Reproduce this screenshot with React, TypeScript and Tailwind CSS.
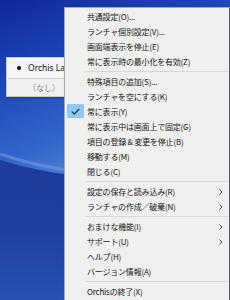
import React from "react";

type Item = { label: string; sub?: boolean; checked?: boolean } | "sep";

const items: Item[] = [
  { label: "共通設定(O)..." },
  { label: "ランチャ個別設定(V)..." },
  { label: "画面端表示を停止(E)" },
  { label: "常に表示時の最小化を有効(Z)" },
  "sep",
  { label: "特殊項目の追加(S)..." },
  { label: "ランチャを空にする(K)" },
  { label: "常に表示(Y)", checked: true },
  { label: "常に表示中は画面上で固定(G)" },
  { label: "項目の登録 & 変更を停止(B)" },
  { label: "移動する(M)" },
  { label: "閉じる(C)" },
  "sep",
  { label: "設定の保存と読み込み(R)", sub: true },
  { label: "ランチャの作成／破棄(N)", sub: true },
  "sep",
  { label: "おまけな機能(I)", sub: true },
  { label: "サポート(U)", sub: true },
  { label: "ヘルプ(H)" },
  { label: "バージョン情報(A)" },
  "sep",
  { label: "Orchisの終了(X)" },
];

const font = { fontFamily: '"Noto Sans CJK JP", "Noto Sans", sans-serif' };

function Wallpaper() {
  return (
    <svg className="absolute inset-0" width="230" height="300" viewBox="0 0 230 300">
      <defs>
        <linearGradient id="top" x1="0" y1="0" x2="0.3" y2="1">
          <stop offset="0" stopColor="#11289a" />
          <stop offset="0.25" stopColor="#1c45b6" />
          <stop offset="0.5" stopColor="#3566cb" />
          <stop offset="0.6" stopColor="#4a7ad3" />
          <stop offset="1" stopColor="#2a58be" />
        </linearGradient>
        <linearGradient id="bot" x1="0" y1="0" x2="0" y2="1">
          <stop offset="0" stopColor="#1c3c9c" />
          <stop offset="0.5" stopColor="#1f409f" />
          <stop offset="1" stopColor="#2852b4" />
        </linearGradient>
      </defs>
      <rect width="230" height="300" fill="url(#top)" />
      <path d="M0 160 C 40 172, 90 182, 230 186 L230 300 L0 300 Z" fill="url(#bot)" />
      <path d="M0 154 C 40 168, 90 178, 230 182" stroke="#7a9ee0" strokeOpacity="0.55" strokeWidth="3" fill="none" />
    </svg>
  );
}

function Check() {
  return (
    <div className="absolute left-[2px] top-[0px] w-[17px] h-[14px] bg-[#90c8f6] flex items-center justify-center">
      <svg width="9" height="7" viewBox="0 0 9 7">
        <path d="M0.8 3.6 L3.3 6 L8.2 1" stroke="#2b3a4a" strokeWidth="1.3" fill="none" />
      </svg>
    </div>
  );
}

function Chevron() {
  return (
    <svg className="absolute left-[154px] top-[5px]" width="4" height="6" viewBox="0 0 4 6">
      <path d="M0.5 0.5 L3 3 L0.5 5.5" stroke="#444" strokeWidth="1" fill="none" />
    </svg>
  );
}

export default function App() {
  return (
    <div className="relative w-[230px] h-[300px] overflow-hidden bg-[#1c45b6]" style={font}>
      <Wallpaper />

      {/* small launcher window */}
      <div className="absolute left-[6px] top-[57px] w-[90px] h-[40px] bg-[#f5f5f5] border border-[#c9c9c9] shadow-[1px_1px_2px_rgba(0,0,0,0.3)] flex flex-col">
        <div className="h-[20px] flex items-center">
          <div className="ml-[10px] w-[4px] h-[4px] rounded-full bg-[#111]" />
          <span className="ml-[7px] text-[8.5px] text-[#111] leading-none" style={{ fontFamily: '"Noto Sans", sans-serif' }}>
            Orchis Launcher
          </span>
        </div>
        <div className="mx-[1px] h-px bg-[#cfcfcf]" />
        <div className="flex-1 flex items-center bg-[#f0f0f0]">
          <span className="ml-[21px] text-[8px] text-[#8d8d8d] leading-none">（なし）</span>
        </div>
      </div>

      {/* context menu */}
      <div className="absolute left-[64px] top-[7px] w-[166px] h-[300px] bg-[#f0f0f0] border border-[#a8a8a8] border-r-[#5a5a6a] pt-px shadow-[2px_2px_3px_rgba(0,0,0,0.3)]">
        <div className="flex flex-col">
          {items.map((it, i) =>
            it === "sep" ? (
              <div key={i} className="h-[5px] flex items-center pl-[20px] pr-[2px]">
                <div className="h-px w-full bg-[#d7d7d7]" />
              </div>
            ) : (
              <div key={i} className="relative h-[15px] flex items-center">
                {it.checked && <Check />}
                <span className="ml-[22px] text-[8px] leading-none text-[#141414] whitespace-nowrap tracking-[-0.2px]">
                  {it.label}
                </span>
                {it.sub && <Chevron />}
              </div>
            )
          )}
        </div>
      </div>
    </div>
  );
}
